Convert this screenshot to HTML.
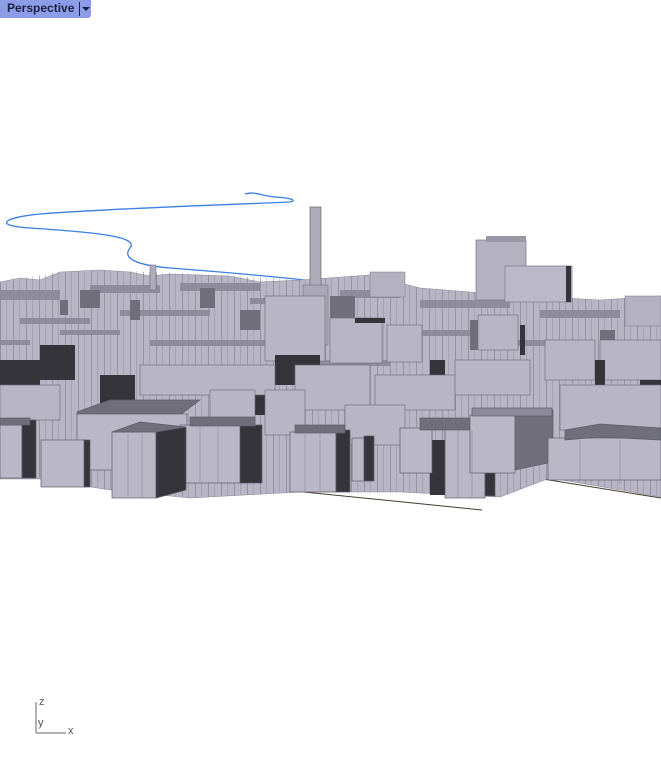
<!DOCTYPE html>
<html><head><style>
html,body{margin:0;padding:0;background:#fff;width:661px;height:769px;overflow:hidden;font-family:"Liberation Sans",sans-serif}
#lbl{position:absolute;left:0;top:0;width:91px;height:18px;background:#8c9ce6;border-radius:0 0 3px 0}
#lbl span{position:absolute;left:7px;top:1px;font-size:12px;font-weight:bold;color:#1c2340}
#lbl i{position:absolute;left:79px;top:2px;width:1px;height:14px;background:#1c2340}
#lbl b{position:absolute;left:82px;top:7px;border-left:4px solid transparent;border-right:4px solid transparent;border-top:4px solid #1c2340}
svg{position:absolute;left:0;top:0}
</style></head><body>
<svg width="661" height="769" viewBox="0 0 661 769">
<defs>
<pattern id="vs" width="13" height="40" patternUnits="userSpaceOnUse">
<rect x="0" y="0" width="1" height="40" fill="#7d7b89" opacity="0.6"/>
<rect x="6" y="0" width="1" height="40" fill="#8a8896" opacity="0.4"/>
</pattern>
</defs>
<g stroke="#4a3b2c" stroke-width="1" fill="none">
<line x1="185" y1="480" x2="482" y2="510"/>
<line x1="518" y1="472" x2="495" y2="497"/>
<line x1="518" y1="475" x2="661" y2="498"/>
</g>
<path d="M245,194 C255,191 262,196 275,197 C290,198 298,200 290,202 C220,205 120,208 40,214 C0,218 -5,226 30,228 C90,232 140,236 130,248 C122,258 135,265 170,268 C260,275 340,282 420,296 C500,305 560,306 600,305" stroke="#3b7fe6" stroke-width="1.3" fill="none"/>
<line x1="598" y1="312" x2="640" y2="312" stroke="#d04040" stroke-width="1.5"/>
<polygon fill="#b8b6c5" stroke="#8a8896" stroke-width="0.5" points="0,282 20,278 40,280 60,272 100,270 130,272 150,276 170,274 230,276 260,282 300,280 370,275 420,288 470,292 530,296 600,300 661,296 661,497 550,478 500,497 400,492 300,492 190,498 110,490 40,479 0,479"/>
<polygon fill="url(#vs)" points="0,282 60,272 100,270 150,272 230,276 300,280 370,275 420,288 470,292 530,296 600,300 661,296 661,497 550,478 500,497 400,492 300,492 190,498 110,490 40,479 0,479"/>
<g fill="#8e8c9a">
<rect x="0" y="290" width="60" height="10"/><rect x="90" y="285" width="70" height="8"/><rect x="180" y="283" width="80" height="8"/>
<rect x="340" y="290" width="60" height="8"/><rect x="420" y="300" width="90" height="8"/><rect x="540" y="310" width="80" height="8"/>
<rect x="20" y="318" width="70" height="6"/><rect x="120" y="310" width="90" height="6"/><rect x="250" y="298" width="60" height="6"/>
<rect x="400" y="330" width="70" height="6"/><rect x="500" y="340" width="90" height="6"/><rect x="600" y="360" width="61" height="6"/>
<rect x="150" y="340" width="130" height="6"/><rect x="290" y="360" width="100" height="6"/>
<rect x="60" y="330" width="60" height="5"/><rect x="0" y="340" width="30" height="5"/>
</g>
<g fill="#6f6e7a">
<rect x="80" y="290" width="20" height="18"/><rect x="130" y="300" width="10" height="20"/><rect x="200" y="288" width="15" height="20"/><rect x="330" y="296" width="25" height="22"/>
<rect x="470" y="320" width="20" height="30"/><rect x="600" y="330" width="15" height="20"/>
<rect x="60" y="300" width="8" height="15"/><rect x="240" y="310" width="20" height="20"/>
</g>
<rect x="476" y="240" width="50" height="60" fill="#b4b2c1" stroke="#7a7886" stroke-width="0.7"/>
<rect x="486" y="236" width="40" height="6" fill="#9a98a6"/>
<rect x="505" y="266" width="67" height="36" fill="#bbb9c8" stroke="#7a7886" stroke-width="0.7"/>
<rect x="566" y="266" width="5" height="36" fill="#35343b"/>
<rect x="310" y="207" width="11" height="125" fill="#aeacbb" stroke="#6a6876" stroke-width="0.7"/>
<rect x="303" y="285" width="25" height="60" fill="#aaa8b7" stroke="#6a6876" stroke-width="0.5"/>
<rect x="150" y="265" width="6" height="25" fill="#aeacbb" stroke="#6a6876" stroke-width="0.5"/>
<rect x="370" y="272" width="35" height="25" fill="#b4b2c1" stroke="#7a7886" stroke-width="0.5"/>
<rect x="625" y="296" width="36" height="30" fill="#b4b2c1" stroke="#7a7886" stroke-width="0.5"/>
<g stroke="#6a6876" stroke-width="0.6">
<rect x="265" y="296" width="60" height="65" fill="#b8b6c5"/>
<rect x="330" y="318" width="52" height="45" fill="#b8b6c5"/>
<rect x="387" y="325" width="35" height="37" fill="#b8b6c5"/>
<rect x="478" y="315" width="40" height="35" fill="#b8b6c5"/>
<rect x="545" y="340" width="50" height="40" fill="#b8b6c5"/>
<rect x="600" y="340" width="61" height="40" fill="#b8b6c5"/>
</g>
<g fill="#35343b">
<rect x="355" y="318" width="30" height="5"/>
<rect x="275" y="355" width="45" height="30"/>
<rect x="40" y="345" width="35" height="35"/>
<rect x="0" y="360" width="40" height="25"/>
<rect x="0" y="390" width="8" height="30"/>
<rect x="100" y="375" width="35" height="30"/>
<rect x="237" y="375" width="35" height="40"/>
<rect x="430" y="360" width="15" height="30"/>
<rect x="430" y="440" width="15" height="55"/>
<rect x="595" y="360" width="10" height="25"/>
<rect x="640" y="380" width="21" height="30"/>
<rect x="520" y="325" width="5" height="30"/>
</g>
<g stroke="#6a6876" stroke-width="0.6">
<rect x="140" y="365" width="135" height="30" fill="#b8b6c5"/>
<rect x="295" y="365" width="75" height="45" fill="#b8b6c5"/>
<rect x="375" y="375" width="80" height="35" fill="#b8b6c5"/>
<rect x="455" y="360" width="75" height="35" fill="#b8b6c5"/>
<rect x="560" y="385" width="101" height="45" fill="#b8b6c5"/>
<rect x="0" y="385" width="60" height="35" fill="#b8b6c5"/>
<rect x="210" y="390" width="45" height="35" fill="#b8b6c5"/>
<rect x="265" y="390" width="40" height="45" fill="#b8b6c5"/>
<rect x="345" y="405" width="60" height="40" fill="#b8b6c5"/>
</g>
<g stroke="#5e5c6a" stroke-width="0.7">
<polygon points="77,412 110,400 200,400 180,415 77,415" fill="#6f6e7a"/>
<rect x="77" y="414" width="110" height="56" fill="#bab8c7"/>
<rect x="0" y="425" width="22" height="53" fill="#bab8c7"/>
<rect x="22" y="420" width="14" height="58" fill="#35343b"/>
<rect x="0" y="418" width="30" height="7" fill="#6f6e7a"/>
<rect x="41" y="440" width="45" height="47" fill="#bab8c7"/>
<rect x="84" y="440" width="6" height="47" fill="#35343b"/>
<rect x="180" y="425" width="62" height="58" fill="#bab8c7"/>
<rect x="240" y="425" width="22" height="58" fill="#35343b"/>
<rect x="190" y="417" width="65" height="9" fill="#6f6e7a"/>
<rect x="112" y="432" width="44" height="66" fill="#bab8c7"/>
<polygon points="156,432 186,427 186,490 156,498" fill="#35343b"/>
<polygon points="112,432 140,422 186,427 156,432" fill="#6f6e7a"/>
<rect x="290" y="432" width="46" height="60" fill="#bab8c7"/>
<rect x="336" y="430" width="14" height="62" fill="#35343b"/>
<rect x="295" y="425" width="50" height="8" fill="#6f6e7a"/>
<rect x="352" y="438" width="12" height="43" fill="#bab8c7"/>
<rect x="364" y="436" width="10" height="45" fill="#35343b"/>
<rect x="400" y="428" width="32" height="45" fill="#bab8c7"/>
<rect x="445" y="428" width="40" height="70" fill="#bab8c7"/>
<rect x="485" y="428" width="10" height="68" fill="#35343b"/>
<rect x="420" y="418" width="75" height="12" fill="#6f6e7a"/>
<rect x="470" y="415" width="45" height="58" fill="#bab8c7"/>
<polygon points="515,415 553,410 553,462 515,470" fill="#6f6e7a"/>
<rect x="472" y="408" width="80" height="8" fill="#8e8c9a"/>
<rect x="548" y="438" width="113" height="42" fill="#bab8c7"/>
<polygon points="565,430 600,424 661,428 661,440 600,437 565,440" fill="#6f6e7a"/>
</g>
<g stroke="#8a8896" stroke-width="0.6">
<line x1="128" y1="434" x2="128" y2="496"/><line x1="142" y1="434" x2="142" y2="497"/>
<line x1="200" y1="427" x2="200" y2="483"/><line x1="218" y1="427" x2="218" y2="483"/>
<line x1="305" y1="434" x2="305" y2="492"/><line x1="320" y1="434" x2="320" y2="492"/>
<line x1="458" y1="430" x2="458" y2="497"/><line x1="472" y1="430" x2="472" y2="497"/>
<line x1="580" y1="440" x2="580" y2="480"/><line x1="620" y1="440" x2="620" y2="485"/>
</g>
<line x1="36" y1="702" x2="36" y2="733" stroke="#666" stroke-width="1"/>
<line x1="36" y1="733" x2="66" y2="733" stroke="#999" stroke-width="1.5"/>
<text x="39" y="705" font-size="11" fill="#555" font-family="Liberation Sans">z</text>
<text x="38" y="726" font-size="11" fill="#555" font-family="Liberation Sans">y</text>
<text x="68" y="734" font-size="11" fill="#555" font-family="Liberation Sans">x</text>
</svg>
<div id="lbl"><span>Perspective</span><i></i><b></b></div>
</body></html>
